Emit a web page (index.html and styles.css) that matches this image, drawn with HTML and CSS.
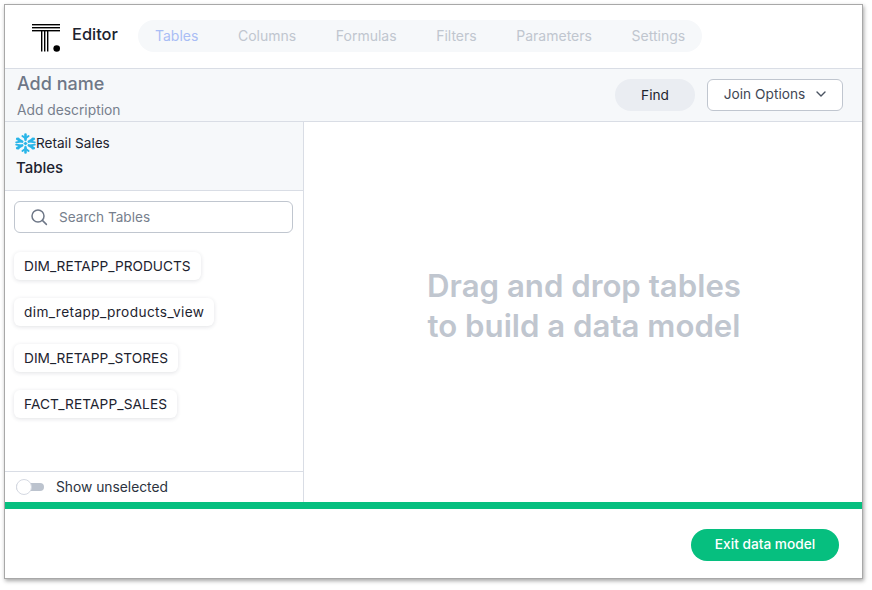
FILE: index.html
```html
<!DOCTYPE html>
<html lang="en">
<head>
<meta charset="utf-8">
<title>Editor</title>
<link rel="stylesheet" href="styles.css">
</head>
<body>
<div class="window">
  <header class="topbar">
    <svg class="logo" width="28" height="28" viewBox="0 0 28 28" aria-hidden="true">
      <g fill="#000">
        <rect x="0" y="0" width="28" height="1.4"/>
        <rect x="0" y="3" width="28" height="1.4"/>
        <rect x="0" y="6" width="28" height="1.4"/>
        <rect x="9" y="6" width="1.4" height="21.5"/>
        <rect x="12" y="6" width="1.4" height="21.5"/>
        <rect x="15" y="6" width="1.4" height="21.5"/>
        <circle cx="24.7" cy="24.5" r="3.3"/>
      </g>
    </svg>
    <span class="brand">Editor</span>
    <nav class="tabs">
      <span class="tab tab-active">Tables</span>
      <span class="tab">Columns</span>
      <span class="tab">Formulas</span>
      <span class="tab">Filters</span>
      <span class="tab">Parameters</span>
      <span class="tab">Settings</span>
    </nav>
  </header>
  <section class="namebar">
    <div class="names">
      <div class="name">Add name</div>
      <div class="desc">Add description</div>
    </div>
    <div class="actions">
      <button class="btn-find">Find</button>
      <button class="btn-join">Join Options
        <svg width="10" height="6" viewBox="0 0 10 6" aria-hidden="true"><path d="M1 1l4 4 4-4" fill="none" stroke="#4a5361" stroke-width="1.4" stroke-linecap="round" stroke-linejoin="round"/></svg>
      </button>
    </div>
  </section>
  <main class="content">
    <aside class="sidebar">
      <div class="side-head">
        <div class="source">
          <svg class="snow" width="21" height="21" viewBox="0 0 21 21" aria-hidden="true">
            <g stroke="#29b5e8" stroke-width="2.6" stroke-linecap="round" fill="none">
              <path d="M10.5 1.6v5.2M10.5 14.2v5.2"/>
              <path d="M2.2 5.8l5 2.9M13.8 12.3l5 2.9"/>
              <path d="M2.2 15.2l5-2.9M13.8 8.7l5-2.9"/>
              <path d="M7.4 3l3.1 2.3L13.6 3" stroke-width="1.9"/>
              <path d="M7.4 18l3.1-2.3 3.1 2.3" stroke-width="1.9"/>
              <path d="M1.2 9.4l3.7-.7-1.5-3.2" stroke-width="1.9"/>
              <path d="M19.8 11.6l-3.7.7 1.5 3.2" stroke-width="1.9"/>
              <path d="M1.2 11.6l3.7.7-1.5 3.2" stroke-width="1.9"/>
              <path d="M19.8 9.4l-3.7-.7 1.5-3.2" stroke-width="1.9"/>
            </g>
            <path d="M10.5 8.4l2.1 2.1-2.1 2.1-2.1-2.1z" fill="#29b5e8"/>
          </svg>
          <span>Retail Sales</span>
        </div>
        <div class="side-title">Tables</div>
      </div>
      <div class="side-body">
        <label class="search">
          <svg width="18" height="18" viewBox="0 0 18 18" aria-hidden="true"><circle cx="8" cy="8" r="6" fill="none" stroke="#6e7787" stroke-width="1.5"/><path d="M12.4 12.4l4 4" stroke="#6e7787" stroke-width="1.5" stroke-linecap="round"/></svg>
          <span>Search Tables</span>
        </label>
        <ul class="chips">
          <li class="chip">DIM_RETAPP_PRODUCTS</li>
          <li class="chip chip-lower">dim_retapp_products_view</li>
          <li class="chip">DIM_RETAPP_STORES</li>
          <li class="chip chip-fact">FACT_RETAPP_SALES</li>
        </ul>
      </div>
      <div class="side-foot">
        <span class="toggle"><span class="knob"></span></span>
        <span>Show unselected</span>
      </div>
    </aside>
    <div class="canvas">
      <p class="hint">Drag and drop tables<br>to build a data model</p>
    </div>
  </main>
  <div class="greenbar"></div>
  <footer class="bottom">
    <button class="btn-exit">Exit data model</button>
  </footer>
</div>
</body>
</html>
```
FILE: styles.css
```css
* { box-sizing: border-box; }
html, body { margin: 0; padding: 0; background: #fff; }
body { padding: 4px 9px 11px 4px; height: 590px; overflow: hidden; font-family: Inter, "Liberation Sans", sans-serif; color: #1d232f; }
.window {
  width: 859px; height: 575px; display: flex; flex-direction: column;
  background: #fff; border: 1px solid #a8a8a8;
  box-shadow: 1px 2px 4px rgba(0,0,0,.35);
}
.topbar { height: 64px; flex: none; display: flex; align-items: center; padding-left: 27px; border-bottom: 1px solid #d9dde5; }
.logo { flex: none; margin-top: 2px; }
.brand { margin-left: 12px; width: 66px; font-size: 16.4px; font-weight: 450; margin-top: -6px; }
.tabs { height: 32px; display: flex; align-items: center; background: #f6f8fa; border-radius: 16px; padding: 0 17px 2px; gap: 39.6px; margin-top: -1px; }
.tab { font-size: 14px; color: #c0c6cf; }
.tab-active { color: #a9bdf5; }
.namebar { height: 53px; flex: none; display: flex; justify-content: space-between; background: #f6f8fa; border-bottom: 1px solid #d9dde5; padding: 0 19px 0 12px; }
.name { font-size: 18px; font-weight: 450; color: #6e7787; line-height: 22px; margin-top: 4px; }
.desc { font-size: 13.8px; color: #777f8d; line-height: 18px; margin-top: 6px; }
.actions { display: flex; gap: 12px; padding-top: 10px; align-items: flex-start; }
.btn-find { width: 80px; height: 32px; border: 0; border-radius: 16px; background: #eaedf2; font: 13.7px Inter, "Liberation Sans", sans-serif; color: #1d232f; padding: 0 0 1px; }
.btn-join { width: 136px; height: 32px; border: 1px solid #c0c6cf; border-radius: 6px; background: #fff; font: 13.7px Inter, "Liberation Sans", sans-serif; color: #3f4754; padding: 0 0 2px; display: flex; align-items: center; justify-content: center; gap: 11px; }
.content { height: 380px; flex: none; display: flex; }
.sidebar { width: 299px; flex: none; display: flex; flex-direction: column; border-right: 1px solid #d9dde5; }
.side-head { height: 69px; flex: none; background: #f6f8fa; border-bottom: 1px solid #d9dde5; padding: 11px 10px 0; }
.source { display: flex; align-items: center; font-size: 13.6px; height: 20px; color: #1d232f; }
.snow { flex: none; margin-right: 0; }
.side-title { font-size: 15px; font-weight: 450; line-height: 20px; margin: 5px 0 0 1px; }
.side-body { flex: 1; min-height: 0; padding: 10px 10px 0 9px; }
.search { height: 32px; display: flex; align-items: center; border: 1px solid #c0c6cf; border-radius: 6px; padding-left: 15px; font-size: 13.6px; color: #777f8d; padding-bottom: 1px; }
.search svg { margin-right: 11px; flex: none; }
.chips { list-style: none; margin: 19px 0 0; padding: 0; display: flex; flex-direction: column; align-items: flex-start; gap: 18px; }
.chip { height: 28px; display: flex; align-items: center; padding: 0 10px; font-size: 13.7px; color: #1d232f; background: #fff; border-radius: 6px; box-shadow: 0 1px 4px rgba(40,50,70,.14); }
.chip-lower { letter-spacing: .37px; }
.chip-fact { letter-spacing: .1px; }
.side-foot { height: 31px; flex: none; display: flex; align-items: center; border-top: 1px solid #d9dde5; padding-left: 11px; font-size: 13.8px; color: #2c3340; }
.toggle { position: relative; width: 28px; height: 8px; margin-right: 12px; background: #bcc3ce; border-radius: 4px; }
.knob { position: absolute; left: 0; top: -4px; width: 16px; height: 16px; background: #fff; border: 1px solid #d5d9e2; border-radius: 50%; }
.canvas { flex: 1; display: flex; align-items: center; justify-content: center; padding-left: 2px; }
.hint { margin: 0; font-size: 31.2px; font-weight: 600; line-height: 40px; color: #c0c6cf; text-align: center; position: relative; top: -6px; }
.greenbar { height: 7px; flex: none; background: #06bf7f; }
.bottom { flex: 1; display: flex; justify-content: flex-end; align-items: flex-start; padding: 20px 23px 0 0; }
.btn-exit { width: 148px; height: 32px; border: 0; border-radius: 16px; background: #06bf7f; color: #fff; font: 450 13.7px Inter, "Liberation Sans", sans-serif; padding: 0 0 2px; }
```
